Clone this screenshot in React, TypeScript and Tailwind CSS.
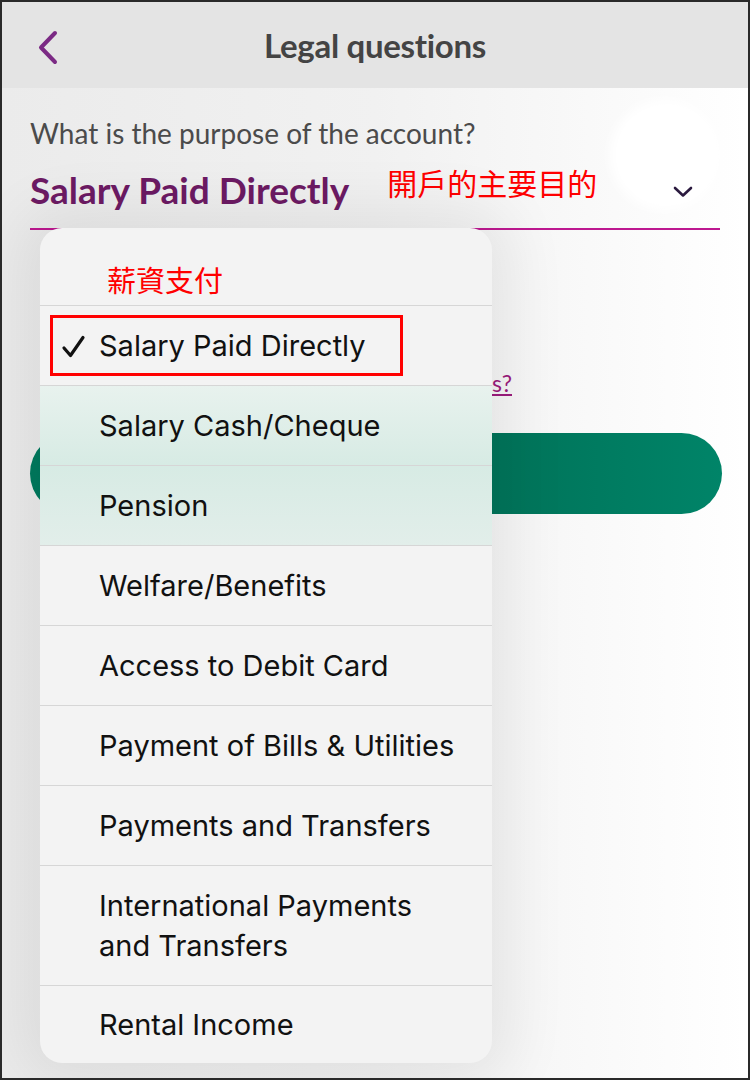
import React from 'react'

const options = [
  'Salary Cash/Cheque',
  'Pension',
  'Welfare/Benefits',
  'Access to Debit Card',
  'Payment of Bills & Utilities',
  'Payments and Transfers',
]

const rowTint: Record<string, string> = {
  'Salary Cash/Cheque': 'bg-gradient-to-b from-[#e8f2ee] to-[#d7ebe4]',
  Pension: 'bg-gradient-to-b from-[#d7ebe4] to-[#e2eeea]',
}

export default function App() {
  const cjk = { fontFamily: '"Noto Sans CJK TC", "Noto Sans", sans-serif' }
  const lato = { fontFamily: 'Lato, "Open Sans", sans-serif' }
  const ios = { fontFamily: 'Inter, Roboto, "Liberation Sans", sans-serif' }

  return (
    <div className="relative w-[750px] h-[1080px] overflow-hidden border-2 border-[#2a2a2a] bg-white flex flex-col" style={lato}>
      {/* header */}
      <div className="relative h-[86px] shrink-0 bg-[#e4e4e4] flex items-center justify-center">
        <svg className="absolute left-[34px] top-[28px]" width="24" height="36" viewBox="0 0 24 36" fill="none">
          <path d="M19 3 L5 17.5 L19 32" stroke="#7b2a84" strokeWidth="4" strokeLinecap="round" strokeLinejoin="round" />
        </svg>
        <h1 className="text-[33px] font-bold text-[#444444] tracking-[-0.3px] leading-none">Legal questions</h1>
      </div>

      {/* page */}
      <div className="relative flex-1 bg-gradient-to-r from-[#ebebeb] via-[#f1f1f1] to-white">
        <div className="absolute right-[28px] top-[12px] w-[110px] h-[110px] rounded-full bg-white blur-[6px]" />
        <div className="relative px-[28px] pt-[28px]">
          <p className="text-[28px] text-[#4b4b4b] leading-[34px]">What is the purpose of the account?</p>
          <div className="flex items-center h-[80px] border-b-2 border-[#bd1890]">
            <span className="text-[37px] font-bold text-[#6c1a63] leading-none">Salary Paid Directly</span>
            <span className="ml-[38px] -mt-[14px] text-[30px] text-[#ff0000] leading-none" style={cjk}>開戶的主要目的</span>
            <svg className="ml-auto mr-[26px] mt-[6px]" width="22" height="14" viewBox="0 0 22 14" fill="none">
              <path d="M3 3 L11 10.5 L19 3" stroke="#2b1a3f" strokeWidth="2.6" strokeLinecap="round" strokeLinejoin="round" />
            </svg>
          </div>
          <div className="h-[203px] pt-[140px] flex justify-end pr-[208px]">
            <a className="text-[23px] leading-[26px] text-[#9b1b7c] underline">Why do we ask these questions?</a>
          </div>
          <button className="w-[692px] h-[81px] rounded-full bg-gradient-to-r from-[#007a5e] via-[#006b52] to-[#008468]" />
        </div>
      </div>

      {/* options menu */}
      <div
        className="absolute left-[38px] top-[226px] w-[452px] rounded-[22px] bg-[#f3f3f3] overflow-hidden shadow-[0_0_60px_20px_rgba(0,0,0,0.07)]"
        style={ios}
      >
        <div className="h-[78px] flex items-center pl-[67px] border-b border-[#d6d6d6]">
          <span className="text-[29px] text-[#ff0000] leading-none mt-[26px]" style={cjk}>薪資支付</span>
        </div>
        <div className="relative h-[80px] flex items-center pl-[59px] border-b border-[#d6d6d6] text-[29px] text-[#111111]">
          <svg className="absolute left-[21px] top-[29px]" width="26" height="24" viewBox="0 0 26 24" fill="none">
            <path d="M3 13 L9.5 20.5 L22 2.5" stroke="#111111" strokeWidth="3.2" strokeLinecap="round" strokeLinejoin="round" />
          </svg>
          Salary Paid Directly
          <div className="absolute left-[10px] top-[9px] w-[353px] h-[61px] border-[3px] border-[#ff0000]" />
        </div>
        {options.map((o) => (
          <div
            key={o}
            className={`h-[80px] flex items-center pl-[59px] border-b border-[#d6d6d6] text-[29px] text-[#111111] ${rowTint[o] ?? ''}`}
          >
            {o}
          </div>
        ))}
        <div className="h-[120px] flex flex-col justify-center pl-[59px] border-b border-[#d6d6d6] text-[29px] text-[#111111] leading-[40px]">
          <span>International Payments</span>
          <span>and Transfers</span>
        </div>
        <div className="h-[77px] flex items-center pl-[59px] text-[29px] text-[#111111]">Rental Income</div>
      </div>
    </div>
  )
}
